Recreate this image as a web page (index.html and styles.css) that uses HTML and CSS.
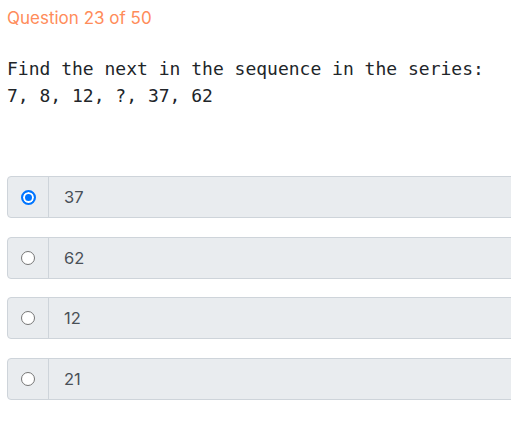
FILE: index.html
```html
<!DOCTYPE html>
<html lang="en">
<head>
<meta charset="utf-8">
<title>Question 23 of 50</title>
<link rel="stylesheet" href="styles.css">
</head>
<body>
<div class="page">
  <h2 class="q-num">Question 23 of 50</h2>
  <div class="q-text">Find the next in the sequence in the series:<br>7, 8, 12, ?, 37, 62</div>
  <div class="options">
    <label class="opt">
      <span class="opt-radio"><span class="radio checked"></span></span>
      <span class="opt-label">37</span>
    </label>
    <label class="opt">
      <span class="opt-radio"><span class="radio"></span></span>
      <span class="opt-label">62</span>
    </label>
    <label class="opt">
      <span class="opt-radio"><span class="radio"></span></span>
      <span class="opt-label">12</span>
    </label>
    <label class="opt">
      <span class="opt-radio"><span class="radio"></span></span>
      <span class="opt-label">21</span>
    </label>
  </div>
</div>
</body>
</html>
```

FILE: styles.css
```css
html, body {
  margin: 0;
  padding: 0;
  background: #fff;
  overflow: hidden;
}
.page {
  padding: 5px 0 0 7px;
  width: 620px;
  font-family: "Inter", "Open Sans", "Liberation Sans", sans-serif;
}
.q-num {
  margin: 0;
  font-size: 17px;
  font-weight: 400;
  line-height: 26px;
  color: #ff8c5a;
}
.q-text {
  margin-top: 24px;
  font-family: "DejaVu Sans Mono", "Liberation Mono", monospace;
  font-size: 18px;
  line-height: 27px;
  color: #212529;
}
.options {
  margin-top: 67px;
  display: flex;
  flex-direction: column;
  gap: 18.7px;
}
.opt {
  display: flex;
  height: 42px;
  box-sizing: border-box;
  border: 1px solid #ced4da;
  border-radius: 4px;
  background: #e9ecef;
}
.opt-radio {
  width: 40px;
  flex: none;
  display: flex;
  align-items: center;
  justify-content: center;
  border-right: 1px solid #ced4da;
}
.radio {
  width: 14px;
  height: 14px;
  box-sizing: border-box;
  border-radius: 50%;
  border: 1px solid #767676;
  background: #fff;
}
.radio.checked {
  width: 15px;
  height: 15px;
  border: 2px solid #0075ff;
  background: #0075ff;
  box-shadow: inset 0 0 0 2px #fff;
}
.opt-label {
  display: flex;
  align-items: center;
  padding-left: 15px;
  font-size: 16.5px;
  color: #495057;
}
```
